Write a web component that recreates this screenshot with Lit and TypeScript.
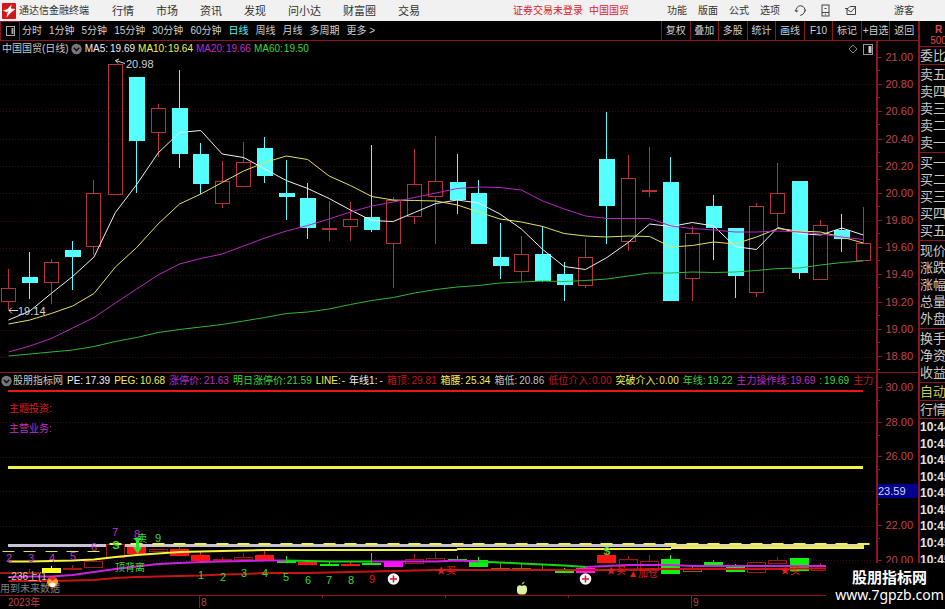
import { LitElement, html, svg, css } from "lit";
import { customElement } from "lit/decorators.js";
import { classMap } from "lit/directives/class-map.js";

type Kind = "up" | "down";
// kind, high, body top, body bottom, low (chart units)
type Candle = [Kind, number, number, number, number];

const STEP = 21.37;
const X0 = 8.5;
const cx = (i: number) => Math.round(X0 + i * STEP - 0.5) + 0.5;

const CANDLES: Candle[] = [
  ["up", 269, 288, 302, 310], ["down", 252, 277, 283, 299], ["up", 259, 262, 283, 304],
  ["down", 241, 250, 257, 290], ["up", 180, 193, 247, 255], ["up", 64, 64, 195, 195],
  ["down", 77, 77, 141, 193], ["up", 104, 108, 133, 157], ["down", 70, 108, 154, 168],
  ["down", 143, 154, 184, 194], ["up", 161, 181, 204, 208], ["up", 142, 162, 187, 187],
  ["down", 137, 148, 176, 183], ["down", 160, 193, 197, 220], ["down", 183, 198, 228, 239],
  ["up", 201, 228, 229, 241], ["up", 202, 219, 227, 241], ["down", 145, 217, 230, 232],
  ["up", 197, 200, 244, 288], ["up", 149, 184, 217, 224], ["up", 136, 181, 197, 244],
  ["down", 154, 182, 200, 214], ["down", 180, 193, 244, 244], ["down", 223, 257, 266, 279],
  ["up", 236, 254, 272, 281], ["down", 226, 254, 281, 282], ["down", 262, 274, 285, 301],
  ["up", 239, 257, 286, 288], ["down", 112, 159, 206, 244], ["up", 155, 178, 242, 251],
  ["up", 147, 190, 192, 197], ["down", 157, 182, 301, 301], ["up", 226, 233, 279, 301],
  ["down", 195, 206, 228, 260], ["down", 228, 228, 276, 298], ["up", 203, 206, 293, 297],
  ["up", 163, 193, 214, 227], ["down", 181, 181, 273, 279], ["up", 220, 225, 280, 280],
  ["down", 214, 230, 239, 252], ["up", 207, 243, 261, 261],
];

const AVERAGES: { cls: string; ys: number[] }[] = [
  { cls: "ma60", ys: [356, 354, 352, 350, 346.5, 341.5, 337.5, 332.5, 329.5, 327, 324.5, 321, 317.5, 313.5, 312, 309, 304.5, 300.5, 297.5, 293, 289.5, 287, 285.5, 283, 282, 281, 281.5, 280.5, 279, 276, 273, 273, 272, 272.5, 272, 270.5, 268.5, 268, 265, 262.5, 261] },
  { cls: "ma5", ys: [320, 311, 293.5, 276.5, 257, 212.5, 184.5, 153, 132.5, 130.5, 154, 157.5, 169, 180.5, 188.5, 198.5, 210, 220.5, 221.5, 212.5, 203.5, 200, 203, 214, 229, 249.5, 266.5, 269.5, 257.5, 242.5, 224, 226.5, 222.5, 226, 246.5, 249.5, 227.5, 233.5, 235, 228, 235] },
  { cls: "ma10", ys: [324, 320, 313.5, 306, 293.5, 267, 247.5, 224, 204, 194, 182.5, 171, 162.5, 156, 159.5, 176, 185.5, 196.5, 200, 200.5, 201, 205, 212, 219, 222, 226.5, 233.5, 236, 237, 236, 236.5, 247, 245.5, 242, 244, 237, 228.5, 231, 232, 237, 243] },
  { cls: "ma20", ys: [352, 346, 338.5, 328, 317.5, 303, 289, 275, 264, 258.5, 254, 246, 238, 231, 225.5, 219, 212, 206, 202, 197.5, 193, 188.5, 187, 187.5, 190, 201, 209, 216, 218.5, 218.5, 218.5, 226, 228.5, 230, 232, 232, 231, 232, 234, 237, 239.5] },
];

// index, top, bottom, wick top, colour class
const MINI: [number, number, number, number, string][] = [
  [0, 572, 574, 572, "hr"], [1, 572, 573, 569, "hr"], [2, 568, 573, 566, "fy"], [3, 568, 569, 565, "hr"],
  [4, 561, 568, 561, "hr"], [5, 544, 558, 544, "hr"], [6, 546, 554, 546, "fr"], [7, 549, 552, 549, "hr"],
  [8, 549, 556, 545, "fr"], [9, 555, 561, 552, "fr"], [10, 559, 561, 557, "hr"], [11, 557, 560, 553, "hr"],
  [12, 555, 560, 551, "fr"], [13, 561, 563, 556, "fg"], [14, 562, 565, 560, "fr"], [15, 564, 565, 561, "fg"],
  [16, 564, 565, 561, "fr"], [17, 563, 565, 553, "fg"], [18, 561, 567, 561, "fm"], [19, 559, 564, 554, "hr"],
  [20, 558, 562, 552, "hr"], [21, 559, 561, 556, "fg"], [22, 560, 567, 557, "fg"], [23, 568, 569, 563, "ho"],
  [24, 568, 569, 564, "ho"], [25, 569, 571, 564, "ho"], [26, 571, 573, 568, "fg"], [27, 568, 573, 566, "fm"],
  [28, 555, 563, 552, "fr"], [29, 559, 571, 556, "hr"], [30, 561, 571, 555, "hr"], [31, 559, 574, 555, "fg"],
  [32, 568, 572, 566, "ho"], [33, 562, 565, 560, "fg"], [34, 565, 572, 564, "fg"], [35, 562, 573, 562, "hr"],
  [36, 560, 564, 557, "hr"], [37, 558, 571, 558, "fg"], [38, 565, 571, 563, "hr"],
];

const MARKS: [string, number, number, string][] = [
  ["2", 9, 562, "m"], ["3", 31, 562, "m"], ["4", 52, 562, "m"], ["5", 73, 560, "m"], ["6", 94, 551, "m"],
  ["7", 115, 536, "m"], ["8", 137, 538, "m"], ["9", 158, 542, "g"],
  ["1", 201, 579, "g"], ["2", 223, 581, "g"], ["3", 244, 577, "g"], ["4", 265, 577, "g"], ["5", 286, 581, "g"],
  ["6", 308, 584, "g"], ["7", 329, 584, "g"], ["8", 351, 584, "g"], ["9", 372, 583, "r"],
];

type Entry = { label: string; value?: string; tone: string };
const PRICE_LEGEND: Entry[] = [
  { label: "MA5:", value: "19.69", tone: "white" },
  { label: "MA10:", value: "19.64", tone: "yellow" },
  { label: "MA20:", value: "19.66", tone: "purple" },
  { label: "MA60:", value: "19.50", tone: "green" },
];
const IND_LEGEND: Entry[] = [
  { label: "PE:", value: "17.39", tone: "white" },
  { label: "PEG:", value: "10.68", tone: "yellow" },
  { label: "涨停价:", value: "21.63", tone: "purple" },
  { label: "明日涨停价:", value: "21.59", tone: "green" },
  { label: "LINE:", value: "-", tone: "yellow" },
  { label: "年线1:", value: "-", tone: "white" },
  { label: "箱顶:", value: "29.81", tone: "red" },
  { label: "箱腰:", value: "25.34", tone: "yellow" },
  { label: "箱低:", value: "20.86", tone: "grey" },
  { label: "低位介入:", value: "0.00", tone: "red" },
  { label: "突破介入:", value: "0.00", tone: "yellow" },
  { label: "年线:", value: "19.22", tone: "green" },
  { label: "主力操作线:", value: "19.69", tone: "purple" },
  { label: ":", value: "19.69", tone: "green" },
  { label: "主力", tone: "red" },
];

const QUOTE_GROUPS: string[][] = [
  ["委比"],
  ["卖五", "卖四", "卖三", "卖二", "卖一"],
  ["买一", "买二", "买三", "买四", "买五"],
  ["现价", "涨跌", "涨幅", "总量", "外盘"],
  ["换手", "净资", "收益"],
];

const line = (ys: number[], from = 0) => ys.map((y, i) => `${(X0 + (i + from) * STEP).toFixed(1)},${y}`).join(" ");

@customElement("app-root")
export class AppRoot extends LitElement {
  static styles = css`
    :host {
      display: flex;
      flex-direction: column;
      min-height: 100vh;
      position: relative;
      overflow: hidden;
      background: #000;
      color: #c8c8c8;
      font: 10px/14px "Liberation Sans", "Noto Sans CJK SC", sans-serif;
      --line: #8e1420;
    }
    * { box-sizing: border-box; }
    button {
      background: none;
      border: 0;
      padding: 0;
      margin: 0;
      color: inherit;
      font: inherit;
      white-space: nowrap;
      cursor: pointer;
    }
    ul { list-style: none; margin: 0; padding: 0; }
    svg { display: block; }

    .top {
      display: flex;
      align-items: center;
      height: 21px;
      padding: 0 31px 0 2px;
      background: #f1f1f1;
      color: #333;
      white-space: nowrap;
    }
    .logo { margin-right: 3px; }
    .menu { display: flex; gap: 22px; margin-left: 23px; font-size: 11px; }
    .login { display: flex; gap: 6px; margin-left: auto; color: #d8232a; }
    .tools { display: flex; align-items: center; gap: 11px; margin-left: 38px; }
    .icons { display: flex; align-items: center; gap: 14px; margin: 0 36px 0 14px; }
    .icons button { display: flex; }

    .body { display: flex; flex: 1; }
    .main { flex: 1; min-width: 0; display: flex; flex-direction: column; }

    .bar {
      display: flex;
      height: 20px;
      border-bottom: 1px solid var(--line);
      color: #d0d0d0;
    }
    .layout {
      width: 20px;
      border: 1px solid var(--line);
      border-bottom: 0;
      display: flex;
      align-items: center;
      justify-content: center;
    }
    .periods { display: flex; align-items: center; gap: 7px; padding-left: 2px; }
    .periods .on { color: #55f0f0; }
    .actions {
      margin-left: auto;
      width: 28%;
      display: grid;
      grid-template-columns: repeat(9, minmax(0, 1fr));
    }
    .actions button {
      display: flex;
      align-items: center;
      justify-content: center;
      border-left: 1px solid var(--line);
    }
    .n { font-size: 11px; }

    .panel { display: flex; border-bottom: 1px solid var(--line); }
    .plot { flex: 1; min-width: 0; }
    .plot svg.chart { width: 100%; height: auto; }
    .legend {
      display: flex;
      align-items: center;
      gap: 3px;
      height: 16px;
      padding: 0 3px 0 2px;
      white-space: nowrap;
      overflow: hidden;
    }
    .legend.short { height: 15px; gap: 4px; padding: 0 0 0 1px; }
    .legend .title { display: flex; align-items: center; gap: 2px; }
    .legend.short .title { gap: 1px; }
    .legend .corner { display: flex; align-items: center; gap: 5px; margin-left: auto; }
    .entry { display: flex; gap: 2px; }
    .entry.tight { gap: 1px; }
    .white { color: #f0f0f0; }
    .yellow { color: #f0f050; }
    .purple { color: #c02cc8; }
    .green { color: #3ad83a; }
    .red { color: #c0181c; }
    .grey { color: #c0c0c0; }

    .axis {
      width: 42px;
      border-left: 2px solid var(--line);
      display: flex;
      flex-direction: column;
      justify-content: space-between;
      padding: 9px 0;
      color: #c2444a;
    }
    .axis.low { padding: 7px 0 28px; }
    .axis li {
      position: relative;
      display: flex;
      justify-content: flex-end;
      height: 14px;
      padding-right: 5px;
    }
    .axis li::before, .axis li::after {
      content: "";
      position: absolute;
      left: 0;
      top: 7px;
      width: 4px;
      height: 1px;
      background: var(--line);
    }
    .axis li::after { top: 20px; width: 2px; }
    .axis .cursor {
      justify-content: flex-start;
      background: #000090;
      color: #d8d8e8;
    }
    .axis .cursor::before { display: none; }

    .time { width: 100%; height: auto; }
    .time text { fill: #c2444a; }

    .side {
      width: 27px;
      border-left: 2px solid var(--line);
      overflow: hidden;
      display: flex;
      flex-direction: column;
      font-size: 13px;
      line-height: 17px;
      white-space: nowrap;
      color: #c8c8c8;
    }
    .flag {
      height: 25px;
      display: flex;
      flex-direction: column;
      align-items: center;
      padding: 3px 0 0 12px;
      font-size: 10px;
      line-height: 10px;
      color: #e04848;
    }
    .flag b { line-height: 12px; }
    .group { border-top: 1px solid var(--line); padding: 1px 0; }
    .group.one { padding: 0; }
    .auto { color: #c8c850; }
    .ticks {
      flex: 1;
      display: flex;
      flex-direction: column;
      border-top: 1px solid var(--line);
      padding-bottom: 41px;
      font-weight: bold;
      font-size: 12px;
      line-height: 16px;
      color: #e4e4e4;
    }
    .ticks li { flex: 1; }

    .brand {
      position: absolute;
      right: 0;
      bottom: 0;
      width: 119px;
      height: 46px;
      padding: 4px 0 0 8px;
      background: #000;
      color: #fff;
      text-align: center;
      font: bold 15px/20px "Noto Sans CJK SC", sans-serif;
    }
    .brand a {
      display: block;
      color: inherit;
      text-decoration: none;
      font: 14px/16px "Noto Sans", sans-serif;
    }

    .grid { stroke: #400810; stroke-dasharray: 1 2; }
    .candle { shape-rendering: crispEdges; }
    .up { stroke: #b8323a; fill: none; }
    .down { stroke: #55ffff; fill: #55ffff; }
    polyline { fill: none; }
    .ma5 { stroke: #f0f0f0; }
    .ma10 { stroke: #e4e060; }
    .ma20 { stroke: #b828c0; }
    .ma60 { stroke: #30b838; }
    .note { fill: #d0d0d0; }
    .arrow { stroke: #d0d0d0; fill: none; }
    .hr { stroke: #a01818; fill: none; }
    .ho { stroke: #8c6420; fill: none; }
    .fr { stroke: #ff1414; fill: #ff1414; }
    .fg { stroke: #10f010; fill: #10f010; }
    .fm { stroke: #ff10ff; fill: #ff10ff; }
    .fy { stroke: #ffff20; fill: #ffff20; }
    .t-m { fill: #c030c8; }
    .t-g { fill: #38d838; }
    .t-r { fill: #e01c1c; }
    .t-grey { fill: #808080; }
    .t-tan { fill: #d8c8a0; }
    .mid { text-anchor: middle; }
    .bold { font-weight: bold; }
    .s-red { stroke: #f01414; stroke-width: 2; }
    .s-dark { stroke: #c81414; stroke-width: 2; }
    .s-yellow { stroke: #f4f440; stroke-width: 3; }
    .s-thin { stroke: #f4f440; stroke-width: 2; }
    .s-dash { stroke: #e4e060; stroke-width: 1; }
    .s-grey { stroke: #c8c4d4; stroke-width: 3; }
    .s-pale { stroke: #dcd8a8; stroke-width: 3; }
    .s-mag { stroke: #d020e0; stroke-width: 2; }
    .s-green { stroke: #10d810; stroke-width: 2; }
    .frame { stroke: #8e1420; }
  `;

  private chevron() {
    return html`<svg width="11" height="12" viewBox="0 0 11 12" aria-hidden="true">
      <circle cx="5.5" cy="6" r="5.2" fill="#777"></circle>
      <path d="M2.8 4.8 5.5 7.6 8.2 4.8" fill="none" stroke="#111" stroke-width="1.5"></path>
    </svg>`;
  }

  private entry(e: Entry) {
    // long captions sit closer to their value
    const tight = e.label.length > 4;
    return html`<span class="entry ${e.tone} ${tight ? "tight" : ""}">
      <span>${e.label}</span>${e.value ? html`<span>${e.value}</span>` : ""}
    </span>`;
  }

  private top() {
    return html`<header class="top">
      <svg class="logo" width="14" height="16" viewBox="0 0 14 16" aria-hidden="true">
        <rect width="14" height="16" rx="1" fill="#d4161c"></rect>
        <path d="M1 7.5 5.5 6 9.5 1.5 9 5.5 13.5 6 8.5 10 4.5 14.5 5.2 10.5 6.5 8.2 4.5 9.3Z" fill="#fff"></path>
      </svg>
      <span>通达信金融终端</span>
      <nav class="menu">
        ${["行情", "市场", "资讯", "发现", "问小达", "财富圈", "交易"].map((t) => html`<button>${t}</button>`)}
      </nav>
      <div class="login"><span>证券交易未登录</span><span>中国国贸</span></div>
      <nav class="tools">
        ${["功能", "版面", "公式", "选项"].map((t) => html`<button>${t}</button>`)}
      </nav>
      <div class="icons">
        <button aria-label="客服"><svg width="13" height="13" viewBox="0 0 13 13" fill="none" stroke="#444">
          <path d="M2.4 7.6A4.4 4.4 0 1 1 10.4 8.3Q9.4 10.8 6.2 11.5M0.8 6 2.4 8 4.2 6.4M11.8 5.6 10.4 8.3"></path>
        </svg></button>
        <button aria-label="手机"><svg width="9" height="13" viewBox="0 0 9 13" fill="none" stroke="#444">
          <rect x="1" y="1" width="7" height="11"></rect><path d="M1 8.5H8M4 10.3H5M3.5 4.5H5.5"></path>
        </svg></button>
        <button aria-label="邮件"><svg width="14" height="13" viewBox="0 0 14 13" fill="none" stroke="#444">
          <path d="M3 4.5V10.5H11.5V3L7 8 3 5.5M12 2.5H6L4 4.5H1"></path>
        </svg></button>
      </div>
      <button>游客</button>
    </header>`;
  }

  private bar() {
    const periods = ["分时", "1分钟", "5分钟", "15分钟", "30分钟", "60分钟", "日线", "周线", "月线", "多周期", "更多 >"];
    return html`<div class="bar">
      <button class="layout" aria-label="布局"><svg width="9" height="10" viewBox="0 0 9 10" fill="none" stroke="#aaa">
        <rect x="0.5" y="0.5" width="8" height="9"></rect><path d="M6.5 2V8" stroke-width="2"></path>
      </svg></button>
      <div class="periods">
        ${periods.map((p) => html`<button class=${classMap({ on: p === "日线" })}>${p}</button>`)}
      </div>
      <div class="actions">
        ${["复权", "叠加", "多股", "统计", "画线", "F10", "标记", "+自选", "返回"].map(
          (a) => html`<button>${a}</button>`
        )}
      </div>
    </div>`;
  }

  private candle([kind, hi, a, b, lo]: Candle, i: number) {
    const x = cx(i);
    const w = kind === "up" ? 7 : 7.5;
    return svg`<g class="candle ${kind}">
      ${hi < a ? svg`<path d="M${x} ${hi}V${a}"></path>` : ""}
      ${lo > b ? svg`<path d="M${x} ${b}V${lo}"></path>` : ""}
      <rect x=${x - w} y=${a + 0.5} width=${w * 2} height=${Math.max(b - a - 1, 1)}></rect>
    </g>`;
  }

  private pricePanel() {
    const grid = Array.from({ length: 11 }, (_, i) => Math.round(84 + i * 27.3) + 0.5);
    const labels = Array.from({ length: 12 }, (_, i) => (21 - i * 0.2).toFixed(2));
    return html`<section class="panel">
      <div class="plot">
        <div class="legend">
          <span class="title">中国国贸(日线) ${this.chevron()}</span>
          ${PRICE_LEGEND.map((e) => this.entry(e))}
          <span class="corner">
            <svg width="10" height="10" viewBox="0 0 10 10" fill="none" stroke="#888"><path d="M5 1 9 5 5 9 1 5Z"></path></svg>
            <svg width="10" height="11" viewBox="0 0 10 11" fill="none" stroke="#999">
              <rect x="0.5" y="0.5" width="9" height="10"></rect><path d="M7 2V9" stroke="#ccc" stroke-width="3"></path>
            </svg>
          </span>
        </div>
        <svg class="chart" viewBox="0 57 876 315">
          ${grid.map((y) => svg`<path class="grid" d="M0 ${y}H876"></path>`)}
          ${CANDLES.map((c, i) => this.candle(c, i))}
          ${AVERAGES.map((m) => svg`<polyline class=${m.cls} points=${line(m.ys)}></polyline>`)}
          <path class="arrow" d="M125 63.5 115.5 60.5M119 59 115.5 60.5 118 63.5"></path>
          <text class="note n" x="126" y="68">20.98</text>
          <path class="arrow" d="M18 310.5H9M12 307.5 9 310.5 12 313.5"></path>
          <text class="note n" x="18" y="315">19.14</text>
        </svg>
      </div>
      <ul class="axis n">${labels.map((l) => html`<li>${l}</li>`)}</ul>
    </section>`;
  }

  private plus(x: number) {
    return svg`<g><circle cx=${x} cy="579" r="5.8" fill="#fff"></circle>
      <path d="M${x - 3.5} 579H${x + 3.5}M${x} 575.5V582.5" stroke="#d81c2c" stroke-width="1.6"></path></g>`;
  }

  private indicatorPanel() {
    const gold = [561.5, 561.5, 561, 560.5, 559.5, 557, 555, 553.5, 552, 551.5, 551, 550.5, 550, 550, 550, 550, 550, 550, 550, 550, 550, 550];
    const base = [581, 581, 581, 580.5, 580, 578, 577, 576.5, 576, 575.5, 574.5, 574, 573, 573, 573, 572.5, 572, 571.5, 571, 570.5, 570, 570, 570, 570, 570, 570, 570, 570, 570, 569.5, 569, 569, 569, 569, 569, 569, 569, 568.5, 568.5, 568.5];
    return html`<section class="panel">
      <div class="plot">
        <div class="legend short">
          <span class="title">${this.chevron()} 股朋指标网</span>
          ${IND_LEGEND.map((e) => this.entry(e))}
        </div>
        <svg class="chart" viewBox="0 388 876 207">
          ${[422.5, 457.5, 491.5, 526.5, 560.5].map((y) => svg`<path class="grid" d="M0 ${y}H876"></path>`)}
          <path class="s-red" d="M8 391H863"></path>
          <text class="t-r" x="9" y="412">主题投资:</text>
          <text class="t-m" x="9" y="432">主营业务:</text>
          <path class="s-yellow" d="M8 467.5H863"></path>

          ${MINI.map(([i, a, b, hi, c]) => {
            const x = cx(i);
            return svg`<g class="candle ${c}"><path d="M${x} ${hi}V${a}"></path>
              <rect x=${x - 9} y=${a + 0.5} width="18" height=${Math.max(b - a - 1, 1)}></rect></g>`;
          })}
          <path class="s-grey" d="M8 545.5H106M125 545.5H671"></path>
          <path class="s-pale" d="M671 545.5H864"></path>
          <path class="s-thin" d="M457 549H671M671 548H864"></path>
          <polyline class="s-thin" points=${line(gold)}></polyline>
          ${Array.from({ length: 41 }, (_, i) =>
            i < 5
              ? svg`<path class="s-dash" d="M${cx(i) - 6} 551.5h12"></path>`
              : svg`<path class="s-thin" d="M${cx(i) - 6} 544h12"></path>`
          )}
          <polyline class="s-dark" points=${line(base)}></polyline>
          <polyline class="s-mag" points=${line([577, 576.5, 576.5, 575, 572, 569, 566.5, 564, 563, 562, 561.5, 561, 560.5, 560.5])}></polyline>
          <polyline class="s-green" points=${line([560.5, 561, 561.5, 561.5, 561.5], 13)}></polyline>
          <polyline class="s-mag" points=${line([561.5, 561.5, 561.5, 561.5, 560.5, 561.5], 17)}></polyline>
          <polyline class="s-green" points=${line([561.5, 562.5, 563.5, 564.5, 565.5, 567], 22)}></polyline>
          <polyline class="s-mag" points=${line([567, 566, 565, 565, 565, 566, 566, 566, 566, 566, 566, 566, 566, 566], 27)}></polyline>

          ${MARKS.map(([t, x, y, c]) => svg`<text class="mid n t-${c}" x=${x} y=${y}>${t}</text>`)}
          <text class="mid n bold t-g" x="116" y="549">S</text>
          <text class="mid n bold t-g" x="607" y="555">S</text>
          <text class="t-g" x="137" y="542">卖</text>
          <path d="M137.5 554 133 547H136V541L133 538H142L139 541V547H142Z" fill="#20e830"></path>
          <text class="t-g" x="115" y="571">顶背离</text>
          <text class="t-tan" x="8" y="580">-236上(1</text>
          <text class="t-grey" x="0" y="592">用到未来数据</text>
          <circle cx="52.5" cy="582" r="5.5" fill="#f4a030"></circle>
          <path d="M47 580Q52.5 573 58 580L55 579 52.5 581 50 579Z" fill="#e02818"></path>
          <path d="M49 584Q52.5 581 56 584L54 587H51Z" fill="#fff"></path>
          <text class="t-r" x="436" y="574">★买</text>
          <text class="t-r" x="606" y="574">★买</text>
          <text class="t-r" x="628" y="577">▲加仓</text>
          <text class="t-r" x="780" y="574">★买</text>
          ${this.plus(393.5)} ${this.plus(585.5)}
          <path d="M522 586C524 584.5 527 585 527 588.500V591C526.5 593.5 525 594.500 524 594.500H520C518.5 594.500 517 593 517 591V588.500C517 585 520 584.500 522 586Z" fill="#dcf0a0"></path>
          <path d="M521.5 584.5Q522 582 524.5 581.5 524.5 584 521.5 584.5Z" fill="#90c850"></path>
        </svg>
      </div>
      <ul class="axis low n">
        ${["30.00", "28.00", "26.00", "23.59", "22.00", "20.00"].map(
          (l) => html`<li class=${classMap({ cursor: l === "23.59" })}>${l}</li>`
        )}
      </ul>
    </section>`;
  }

  render() {
    return html`
      ${this.top()}
      <div class="body">
        <main class="main">
          ${this.bar()} ${this.pricePanel()} ${this.indicatorPanel()}
          <svg class="time" viewBox="0 597 918 12">
            <path class="frame" d="M199.5 597V609M691.5 597V609M322.5 597v2M445.5 597v2M568.5 597v2"></path>
            <text x="8" y="607">2023年</text>
            <text x="201" y="607">8</text>
            <text x="693" y="607">9</text>
          </svg>
        </main>
        <aside class="side">
          <div class="flag"><b>R</b><span>500</span></div>
          ${QUOTE_GROUPS.map((g) => html`<ul class="group ${g.length === 1 ? "one" : ""}">${g.map((t) => html`<li>${t}</li>`)}</ul>`)}
          <div class="group one auto">自动</div>
          <div class="group one">行情</div>
          <ul class="ticks">
            ${["10:44", ...Array.from({ length: 8 }, () => "10:45")].map((t) => html`<li>${t}</li>`)}
          </ul>
        </aside>
      </div>
      <div class="brand">股朋指标网<a href="#">www.7gpzb.com</a></div>
    `;
  }
}
